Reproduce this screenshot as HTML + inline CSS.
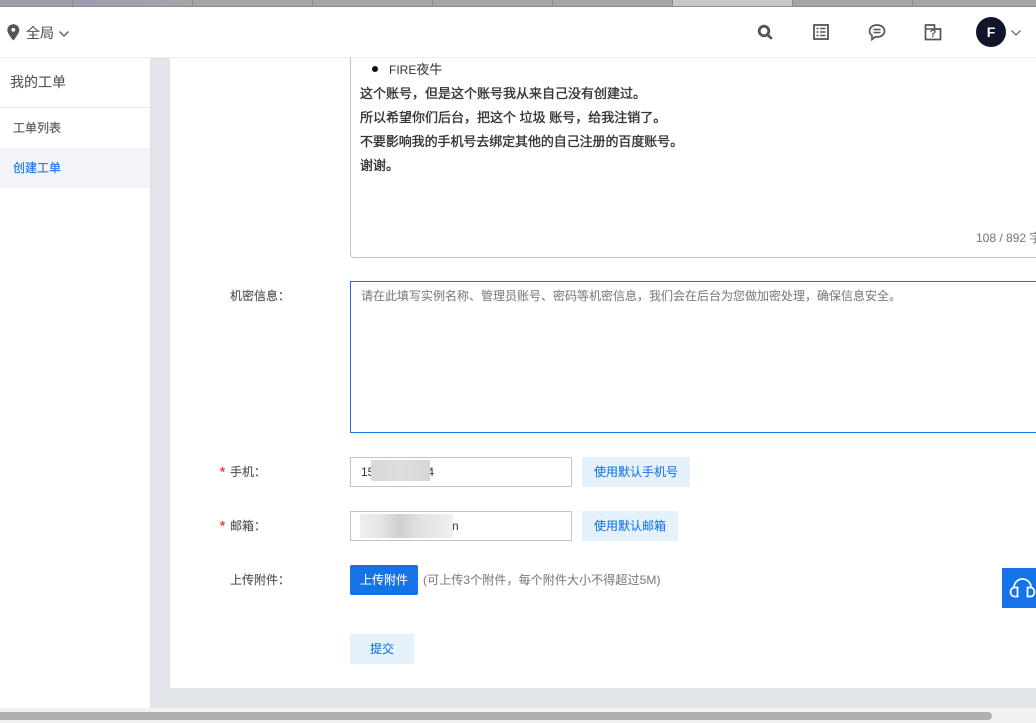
<!DOCTYPE html>
<html><head><meta charset="utf-8">
<style>
html,body{margin:0;padding:0;width:1036px;height:723px;overflow:hidden;background:#e1e5e9}
body{position:relative;font-family:"Liberation Sans","Noto Sans CJK SC",sans-serif;color:#555}
.a{position:absolute;white-space:nowrap}
.t{font-size:12px;line-height:20px;-webkit-text-stroke:.15px currentColor}
.lb{font-size:12px;line-height:20px;color:#555;-webkit-text-stroke:.15px #555}
.box{position:absolute;box-sizing:border-box;background:#fff}
.tab{position:absolute;top:0;height:6px;width:119px;border-right:1px solid #8c8a8e;background:#a8a4a8}
.line{font-size:13px;line-height:24px;color:#333;-webkit-text-stroke:.35px #333;font-weight:400}
.btn{position:absolute;background:#e4f2fe;color:#1a73e8;font-size:12px;text-align:center;height:30px;line-height:30px;-webkit-text-stroke:.1px #1a73e8}
</style></head><body>
<!-- tab strip -->
<div class="a" style="left:0;top:0;width:1036px;height:7px;background:#a8a4a8"></div>
<div class="tab" style="left:0;width:72px;background:#9c9eb0"></div>
<div class="tab" style="left:73px;background:linear-gradient(90deg,#9a9cb2,#a8a4a8)"></div>
<div class="tab" style="left:193px"></div>
<div class="tab" style="left:313px"></div>
<div class="tab" style="left:433px"></div>
<div class="tab" style="left:553px"></div>
<div class="tab" style="left:673px;background:#c9c6c9"></div>
<div class="tab" style="left:793px"></div>
<div class="tab" style="left:913px;width:123px;border-right:0"></div>
<div class="a" style="left:0;top:6px;width:1036px;height:1px;background:#8e8c90"></div>

<!-- header -->
<div class="a" style="left:0;top:7px;width:1036px;height:50px;background:#fff;border-bottom:1px solid #eceef3"></div>
<svg class="a" style="left:7px;top:24px" width="13" height="17" viewBox="0 0 13 17"><path d="M6.300 .3C3 .3 .3 2.800 .3 6c0 3.800 6 10.500 6 10.500s6-6.700 6-10.500C12.300 2.800 9.600 .3 6.300 .3z" fill="#555"/><circle cx="6.300" cy="5.800" r="1.900" fill="#fff"/></svg>
<div class="a" style="left:26px;top:23px;font-size:14px;line-height:20px;color:#555;-webkit-text-stroke:.1px #555">全局</div>
<svg class="a" style="left:58px;top:30px" width="12" height="8" viewBox="0 0 12 8"><path d="M1.500 1.500L6 6l4.500-4.500" fill="none" stroke="#666" stroke-width="1.500"/></svg>

<!-- header icons -->
<svg class="a" style="left:757px;top:24px" width="16" height="16" viewBox="0 0 16 16"><circle cx="7" cy="7" r="4.800" fill="none" stroke="#555" stroke-width="2.800"/><path d="M10.500 10.800L14 14" stroke="#555" stroke-width="2.800" stroke-linecap="round"/></svg>
<svg class="a" style="left:813px;top:24px" width="16" height="16" viewBox="0 0 16 16"><rect x="1" y="1" width="14" height="14" fill="none" stroke="#555" stroke-width="1.800"/><path d="M3.500 4.500h2M7 4.500h5.500M3.500 8h2M7 8h5.500M3.500 11.500h2M7 11.500h5.500" stroke="#555" stroke-width="1.400"/></svg>
<svg class="a" style="left:868px;top:24px" width="18" height="17" viewBox="0 0 18 17"><path d="M9 1C4.800 1 1.500 3.500 1.500 7c0 2 1 3.500 2.500 4.500V15.500l3.200-2.600c.6.100 1.200.1 1.800.1 4.200 0 7.500-2.500 7.500-6S13.200 1 9 1z" fill="none" stroke="#555" stroke-width="1.700"/><path d="M5.500 5.500h7M5.500 8.500h7" stroke="#555" stroke-width="1.600"/></svg>
<svg class="a" style="left:924px;top:24px" width="18" height="17" viewBox="0 0 18 17"><path d="M1.500 15.500V1h9v4h6v10.500z" fill="none" stroke="#555" stroke-width="1.700"/><path d="M1.500 5h9" stroke="#555" stroke-width="1.500"/></svg>
<div class="a" style="left:924px;top:29px;width:18px;text-align:center;font-size:11px;font-weight:bold;line-height:11px;color:#555">?</div>
<div class="a" style="left:976px;top:17px;width:30px;height:30px;border-radius:50%;background:#10172a;color:#fff;text-align:center;line-height:30px;font-size:14px;font-weight:bold">F</div>
<svg class="a" style="left:1010px;top:29px" width="12" height="8" viewBox="0 0 12 8"><path d="M1.500 1.500L6 6l4.500-4.500" fill="none" stroke="#777" stroke-width="1.500"/></svg>

<!-- sidebar -->
<div class="a" style="left:0;top:58px;width:150px;height:650px;background:#fff;border-right:1px solid #dfe3e7"></div>
<div class="a" style="left:10px;top:72px;font-size:14px;line-height:20px;color:#555;-webkit-text-stroke:.1px #555">我的工单</div>
<div class="a" style="left:0;top:107px;width:150px;height:1px;background:#e6e8ee"></div>
<div class="a t" style="left:13px;top:118px;color:#555">工单列表</div>
<div class="a" style="left:0;top:148px;width:150px;height:40px;background:#f2f4fa"></div>
<div class="a t" style="left:13px;top:158px;color:#1a73e8">创建工单</div>

<!-- content -->
<div class="a" style="left:170px;top:58px;width:866px;height:630px;background:#fff"></div>
<div class="box" style="left:350px;top:58px;width:700px;height:200px;border:1px solid #c4c4c4;border-top:0;border-radius:0 0 4px 4px"></div>
<div class="a" style="left:372px;top:66px;width:6px;height:6px;border-radius:50%;background:#111"></div>
<div class="a" style="left:389px;top:58px;font-size:13px;line-height:24px;color:#333"><span style="font-size:12px">FIRE</span>夜牛</div>
<div class="a line" style="left:360px;top:82px">这个账号，但是这个账号我从来自己没有创建过。</div>
<div class="a line" style="left:360px;top:106px">所以希望你们后台，把这个 垃圾 账号，给我注销了。</div>
<div class="a line" style="left:360px;top:130px;letter-spacing:-.08px">不要影响我的手机号去绑定其他的自己注册的百度账号。</div>
<div class="a line" style="left:360px;top:154px">谢谢。</div>
<div class="a" style="left:976px;top:228px;font-size:12px;line-height:20px;color:#808080;-webkit-text-stroke:.1px #808080">108 / 892 字</div>

<div class="a lb" style="left:230px;top:286px">机密信息：</div>
<div class="box" style="left:350px;top:281px;width:700px;height:152px;border:1px solid #1a73e8"></div>
<div class="a" style="left:361px;top:286px;font-size:12px;line-height:20px;color:#808080;-webkit-text-stroke:.1px #808080">请在此填写实例名称、管理员账号、密码等机密信息，我们会在后台为您做加密处理，确保信息安全。</div>

<div class="a" style="left:220px;top:464px;font-size:13px;font-weight:bold;line-height:16px;color:#f33">*</div>
<div class="a lb" style="left:230px;top:462px">手机：</div>
<div class="box" style="left:350px;top:457px;width:222px;height:30px;border:1px solid #c4c4c4"></div>
<div class="a" style="left:361px;top:462px;font-size:12px;line-height:20px;color:#333">15</div>
<div class="a" style="left:422px;top:462px;font-size:12px;line-height:20px;color:#333;width:12px;text-align:right">4</div>
<div class="a" style="left:371px;top:460px;width:59px;height:21px;background:linear-gradient(90deg,#d8d8d8,#dedede 50%,#d6d6d6)"></div>
<div class="btn" style="left:582px;top:457px;width:108px">使用默认手机号</div>

<div class="a" style="left:220px;top:518px;font-size:13px;font-weight:bold;line-height:16px;color:#f33">*</div>
<div class="a lb" style="left:230px;top:516px">邮箱：</div>
<div class="box" style="left:350px;top:511px;width:222px;height:30px;border:1px solid #c4c4c4"></div>
<div class="a" style="left:452px;top:516px;font-size:12px;line-height:20px;color:#333">n</div>
<div class="a" style="left:360px;top:514px;width:93px;height:24px;background:linear-gradient(90deg,#eeeeee,#e8e8e8 20%,#cfcfcf 42%,#e2e2e2 65%,#efefef)"></div>
<div class="btn" style="left:582px;top:511px;width:96px">使用默认邮箱</div>

<div class="a lb" style="left:230px;top:570px">上传附件：</div>
<div class="a" style="left:350px;top:565px;width:68px;height:30px;background:#1473e6;border-radius:2px;color:#fff;font-size:12px;line-height:30px;text-align:center;-webkit-text-stroke:.1px #fff">上传附件</div>
<div class="a" style="left:423px;top:570px;font-size:12px;line-height:20px;color:#808080;letter-spacing:.1px;-webkit-text-stroke:.1px #808080">(可上传3个附件，每个附件大小不得超过5M)</div>
<div class="btn" style="left:350px;top:634px;width:64px">提交</div>

<!-- float button -->
<div class="a" style="left:1002px;top:568px;width:34px;height:40px;background:#1473e6"></div>
<svg class="a" style="left:1009px;top:578px" width="27" height="20" viewBox="0 0 27 20"><path d="M5 10V9.500a8.500 8.500 0 0 1 17 0V10" fill="none" stroke="#fff" stroke-width="1.800"/><path d="M8.500 9.500v9H5.500a4 4.500 0 0 1 0-9zM18.500 9.500v9h3a4 4.500 0 0 0 0-9z" fill="none" stroke="#fff" stroke-width="1.800"/></svg>

<!-- scrollbar -->
<div class="a" style="left:0;top:708px;width:1036px;height:15px;background:#f1f1f1"></div>
<div class="a" style="left:0;top:712px;width:992px;height:8px;background:#b0b0b0;border-radius:0 4px 4px 0"></div>
</body></html>
